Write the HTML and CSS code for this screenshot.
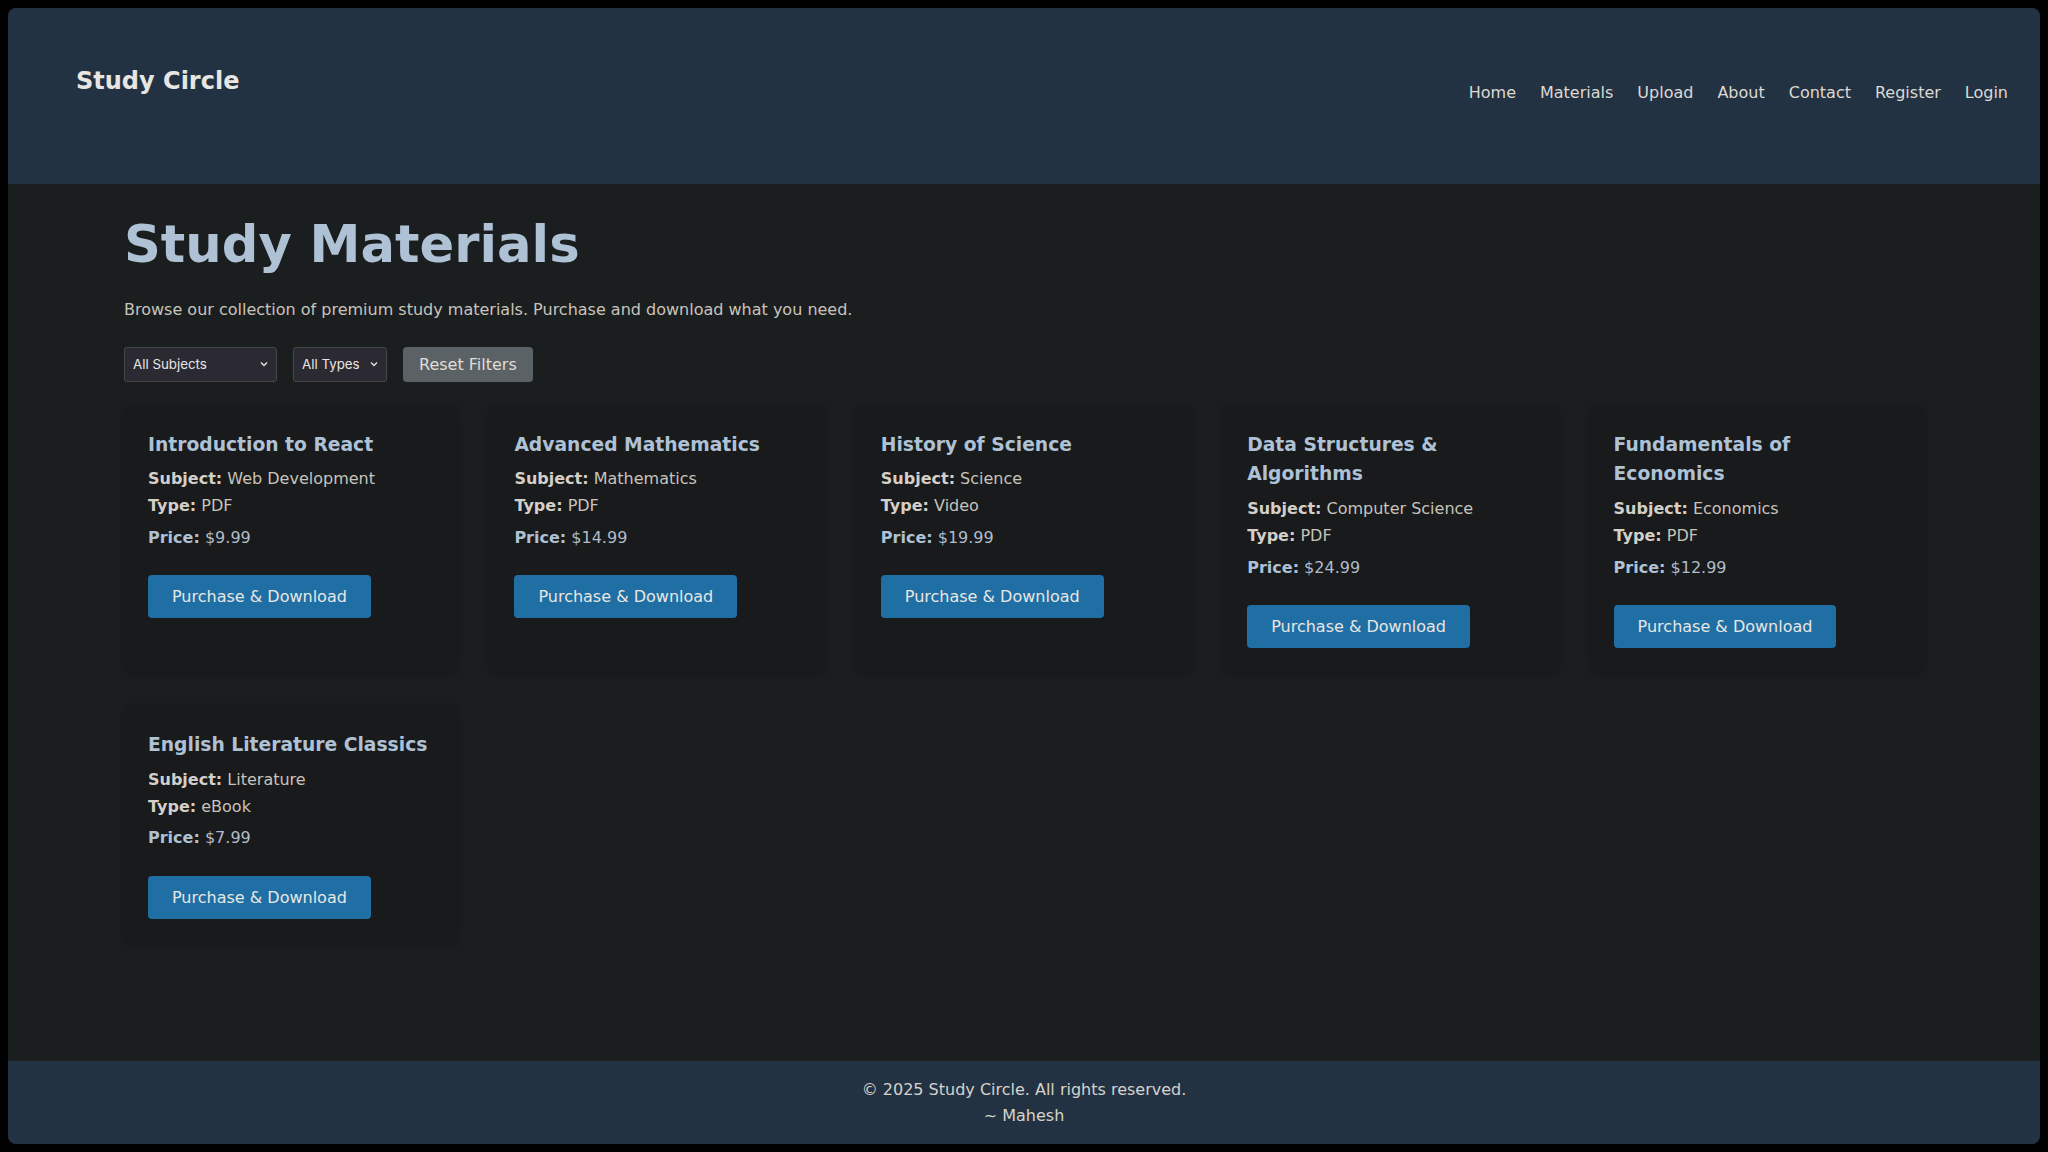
FILE: index.html
```html
<!DOCTYPE html>
<html lang="en">
<head>
<meta charset="utf-8">
<title>Study Materials - Study Circle</title>
<link rel="stylesheet" href="styles.css">
</head>
<body>
<div class="page">
  <header class="site-header">
    <div class="logo">Study Circle</div>
    <nav class="nav">
      <a href="#">Home</a>
      <a href="#">Materials</a>
      <a href="#">Upload</a>
      <a href="#">About</a>
      <a href="#">Contact</a>
      <a href="#">Register</a>
      <a href="#">Login</a>
    </nav>
  </header>

  <main class="main">
    <h1 class="page-title">Study Materials</h1>
    <p class="intro">Browse our collection of premium study materials. Purchase and download what you need.</p>

    <div class="filters">
      <span class="select-wrap subjects">
        <select class="filter-select">
          <option>All Subjects</option>
        </select>
        <svg class="chev" width="10" height="10" viewBox="0 0 10 10"><path d="M2 3.5 L5 6.5 L8 3.5" fill="none" stroke="#e8e6e3" stroke-width="1.3"/></svg>
      </span>
      <span class="select-wrap types">
        <select class="filter-select">
          <option>All Types</option>
        </select>
        <svg class="chev" width="10" height="10" viewBox="0 0 10 10"><path d="M2 3.5 L5 6.5 L8 3.5" fill="none" stroke="#e8e6e3" stroke-width="1.3"/></svg>
      </span>
      <button class="reset-btn">Reset Filters</button>
    </div>

    <div class="grid">
      <div class="card">
        <h3 class="card-title">Introduction to React</h3>
        <p class="meta"><strong>Subject:</strong> Web Development</p>
        <p class="meta"><strong>Type:</strong> PDF</p>
        <p class="price"><strong>Price:</strong> $9.99</p>
        <button class="buy-btn">Purchase &amp; Download</button>
      </div>
      <div class="card">
        <h3 class="card-title">Advanced Mathematics</h3>
        <p class="meta"><strong>Subject:</strong> Mathematics</p>
        <p class="meta"><strong>Type:</strong> PDF</p>
        <p class="price"><strong>Price:</strong> $14.99</p>
        <button class="buy-btn">Purchase &amp; Download</button>
      </div>
      <div class="card">
        <h3 class="card-title">History of Science</h3>
        <p class="meta"><strong>Subject:</strong> Science</p>
        <p class="meta"><strong>Type:</strong> Video</p>
        <p class="price"><strong>Price:</strong> $19.99</p>
        <button class="buy-btn">Purchase &amp; Download</button>
      </div>
      <div class="card">
        <h3 class="card-title">Data Structures &amp; Algorithms</h3>
        <p class="meta"><strong>Subject:</strong> Computer Science</p>
        <p class="meta"><strong>Type:</strong> PDF</p>
        <p class="price"><strong>Price:</strong> $24.99</p>
        <button class="buy-btn">Purchase &amp; Download</button>
      </div>
      <div class="card">
        <h3 class="card-title">Fundamentals of Economics</h3>
        <p class="meta"><strong>Subject:</strong> Economics</p>
        <p class="meta"><strong>Type:</strong> PDF</p>
        <p class="price"><strong>Price:</strong> $12.99</p>
        <button class="buy-btn">Purchase &amp; Download</button>
      </div>
      <div class="card">
        <h3 class="card-title">English Literature Classics</h3>
        <p class="meta"><strong>Subject:</strong> Literature</p>
        <p class="meta"><strong>Type:</strong> eBook</p>
        <p class="price"><strong>Price:</strong> $7.99</p>
        <button class="buy-btn">Purchase &amp; Download</button>
      </div>
    </div>
  </main>

  <footer class="site-footer">
    <p>&copy; 2025 Study Circle. All rights reserved.</p>
    <p class="author">~ Mahesh</p>
  </footer>
</div>
</body>
</html>
```

FILE: styles.css
```css
html {
  background: #000;
}

body {
  margin: 8px;
  font-family: "DejaVu Sans", sans-serif;
  font-size: 16px;
  line-height: 1.6;
  color: #e8e6e3;
}

.page {
  min-height: calc(100vh - 16px);
  display: flex;
  flex-direction: column;
  border-radius: 8px;
  overflow: hidden;
  background: #1b1e1f;
}

.site-header {
  height: 176px;
  box-sizing: border-box;
  background: #233242;
  display: flex;
  justify-content: space-between;
  align-items: flex-start;
  padding: 54px 32px 0 68px;
}

.logo {
  font-size: 24px;
  font-weight: bold;
  color: #e8e6e3;
}

.nav {
  display: flex;
  gap: 24px;
  margin-top: 18px;
}

.nav a {
  color: #dcd9d4;
  text-decoration: none;
}

.main {
  flex: 1;
  width: 1800px;
  margin: 0 auto;
  padding: 30px 0 40px;
}

.page-title {
  font-size: 51.2px;
  line-height: 1.2;
  margin: 0 0 22px;
  color: #aec1d5;
}

.intro {
  margin: 0 0 23.5px;
  color: #c8c3bc;
}

.filters {
  display: flex;
  gap: 16px;
  margin-bottom: 22px;
}

.select-wrap {
  position: relative;
  display: inline-block;
}

.filter-select {
  appearance: none;
  -webkit-appearance: none;
  height: 35px;
  box-sizing: border-box;
  padding: 0 8px;
  font-family: Inter, "DejaVu Sans", sans-serif;
  font-size: 13.33px;
  color: #e8e6e3;
  background: #2b2a33;
  border: 1px solid #45474b;
  border-radius: 3px;
}

.subjects .filter-select {
  width: 153px;
}

.types .filter-select {
  width: 94px;
}

.chev {
  position: absolute;
  right: 8px;
  top: 12px;
  pointer-events: none;
}

.reset-btn {
  height: 35px;
  padding: 0 16px;
  font-family: "DejaVu Sans", sans-serif;
  font-size: 16px;
  color: #e0ddd8;
  background: #5a6266;
  border: none;
  border-radius: 4px;
}

.grid {
  display: grid;
  grid-template-columns: repeat(5, 1fr);
  gap: 32px;
}

.card {
  background: #181a1b;
  border-radius: 8px;
  padding: 24px;
  box-shadow: 0 2px 8px rgba(0, 0, 0, 0.25);
}

.card-title {
  font-size: 18.72px;
  line-height: 1.6;
  margin: 2px 0 7px;
  color: #aec1d5;
}

.meta {
  margin: 0 0 1px;
  color: #c8c3bc;
}

.meta strong {
  color: #d4cfc8;
}

.price {
  margin: 6px 0 25px;
  color: #b0bccb;
}

.price strong {
  color: #aec1d5;
}

.buy-btn {
  height: 43px;
  padding: 0 24px;
  font-family: "DejaVu Sans", sans-serif;
  font-size: 16px;
  color: #e8e6e3;
  background: #1f6fa5;
  border: none;
  border-radius: 4px;
}

.site-footer {
  background: #233242;
  padding: 16px 16px 15px;
  text-align: center;
}

.site-footer p {
  margin: 0;
  color: #d6d2cc;
}

.site-footer .author {
  margin-top: 1px;
}
```
